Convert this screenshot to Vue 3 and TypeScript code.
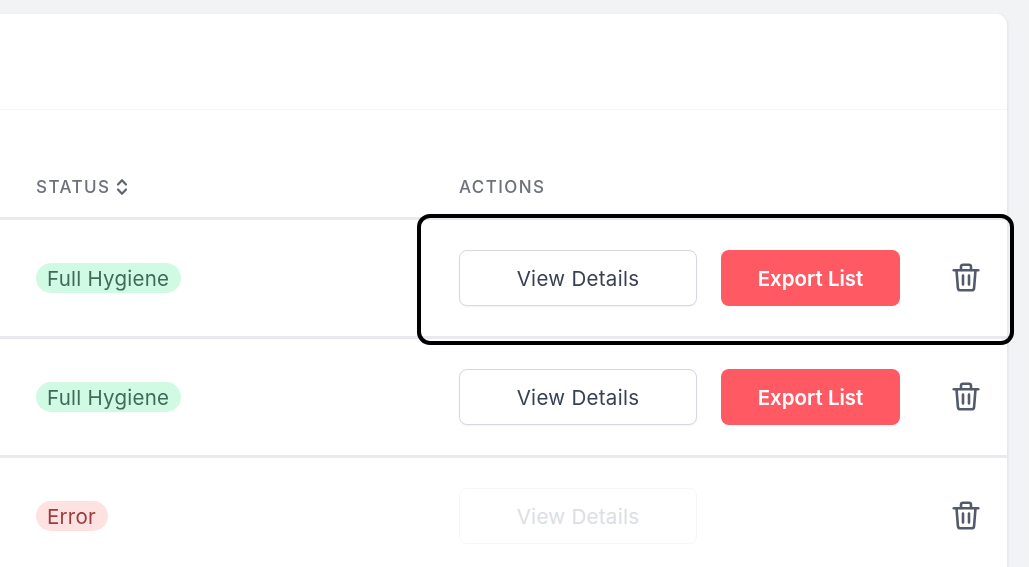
<script setup lang="ts">
interface Row {
  label: string
  tone: 'ok' | 'error'
  exportable: boolean
}

const rows: Row[] = [
  { label: 'Full Hygiene', tone: 'ok', exportable: true },
  { label: 'Full Hygiene', tone: 'ok', exportable: true },
  { label: 'Error', tone: 'error', exportable: false },
]
</script>

<template>
  <div class="page">
    <div class="card">
      <div class="card-head"></div>
      <div class="table-head">
        <div class="col-status th">
          STATUS
          <svg class="sort" width="12" height="18" viewBox="0 0 12 18" fill="none">
            <path d="M2 6.500 6 2.200l4 4.300M2 11.500l4 4.300 4-4.300" stroke="#5f6570" stroke-width="2.200" stroke-linecap="round" stroke-linejoin="round" />
          </svg>
        </div>
        <div class="th">ACTIONS</div>
      </div>
      <div v-for="(row, i) in rows" :key="i" class="row">
        <div class="col-status">
          <span class="badge" :class="row.tone">{{ row.label }}</span>
        </div>
        <div class="actions">
          <button class="btn outline" :class="{ disabled: !row.exportable }">View Details</button>
          <button v-if="row.exportable" class="btn danger">Export List</button>
          <svg class="trash" width="28" height="29" viewBox="0 0 28 29" fill="none" stroke="#525a6b" stroke-width="2.600" stroke-linecap="round" stroke-linejoin="round">
            <path d="M1.800 7.200h24.400" />
            <path d="M9 7V3.800C9 2.500 9.900 1.700 11 1.700h6c1.100 0 2 .8 2 2.100V7" />
            <path d="M4.500 7.200l1.400 17.600c.1 1.500 1.100 2.500 2.500 2.500h11.200c1.400 0 2.400-1 2.500-2.500l1.400-17.600" />
            <path d="M11 12.500v9M17 12.500v9" />
          </svg>
        </div>
      </div>
    </div>
    <div class="highlight"></div>
  </div>
</template>

<style>
html,
body {
  margin: 0;
  overflow: hidden;
}
</style>

<style scoped>
.page {
  position: relative;
  width: 1029px;
  height: 567px;
  overflow: hidden;
  box-sizing: border-box;
  padding: 14px 22px 0 0;
  background: #f2f3f5;
  font-family: Inter, "Liberation Sans", sans-serif;
}

.card {
  height: 600px;
  background: #fff;
  border-radius: 0 11px 0 0;
  box-shadow: 1px 1px 3px rgba(20, 24, 40, 0.08);
  filter: blur(0.4px);
}

.card-head {
  height: 95px;
  border-bottom: 1px solid #f6f6f8;
}

.table-head,
.row {
  display: flex;
  box-sizing: border-box;
  padding-left: 36px;
  align-items: center;
}

.table-head {
  height: 110px;
  padding-top: 47px;
  border-bottom: 3px solid #e9e9ef;
}

.th {
  display: flex;
  align-items: center;
  gap: 6px;
  font-size: 17px;
  font-weight: 500;
  letter-spacing: 1.400px;
  color: #6c717b;
}

.col-status {
  width: 423px;
  flex: none;
}

.row {
  height: 119px;
  border-bottom: 3px solid #e9e9ef;
}

.badge {
  display: inline-flex;
  align-items: center;
  height: 30px;
  padding: 0 12px 0 11px;
  border-radius: 15px;
  font-size: 20.500px;
  letter-spacing: 0.250px;
}

.badge.ok {
  background: #d1fae5;
  color: #3f6b5a;
}

.badge.error {
  background: #fee2e2;
  color: #9b3c3c;
}

.actions {
  display: flex;
  align-items: center;
  gap: 24px;
  flex: 1;
  position: relative;
}

.btn {
  height: 56px;
  box-sizing: border-box;
  border-radius: 8px;
  font-family: inherit;
  font-size: 20.500px;
  letter-spacing: 0.300px;
  padding: 0;
}

.outline {
  width: 238px;
  font-weight: 400;
  background: #fff;
  color: #374151;
  border: 1.500px solid #d5d8e0;
  box-shadow: 0 1px 2px rgba(20, 24, 40, 0.05);
}

.outline.disabled {
  color: #dcdee4;
  border-color: #f6f6f8;
  box-shadow: none;
}

.danger {
  width: 179px;
  font-weight: 600;
  color: #fff;
  background: #ff5964;
  border: 0;
  letter-spacing: 0;
}

.trash {
  position: absolute;
  left: 492.500px;
  top: 50%;
  margin-top: -15px;
}

.highlight {
  position: absolute;
  left: 417px;
  top: 214px;
  width: 597px;
  height: 131px;
  box-sizing: border-box;
  border: 4px solid #000;
  border-radius: 13px;
}
</style>
